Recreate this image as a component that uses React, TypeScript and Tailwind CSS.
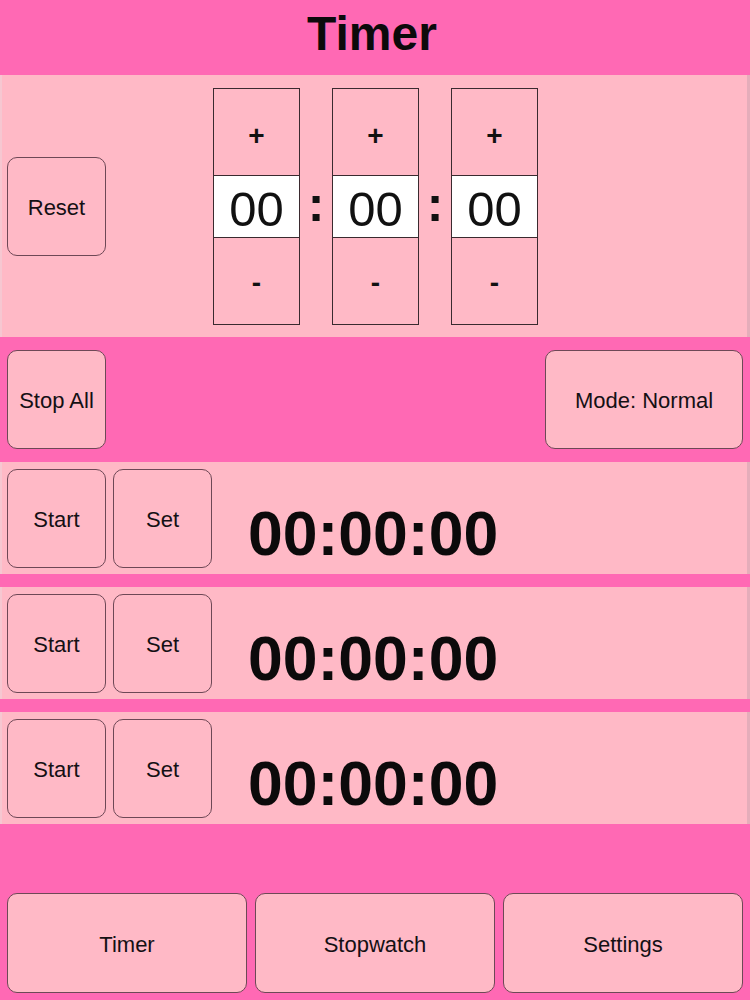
import React from "react";

const font = "font-['Liberation_Sans',Arial,Helvetica,sans-serif]";

function PinkButton({ label, className = "" }: { label: string; className?: string }) {
  return (
    <button
      type="button"
      className={`flex items-center justify-center rounded-[10px] border border-[#6e4856] bg-[#ffb9c6] pt-[3px] text-[22px] leading-none text-[#141014] ${className}`}
    >
      {label}
    </button>
  );
}

function Spinner({ value }: { value: string }) {
  return (
    <div className="flex w-[87px] flex-col border border-[#3a2a2f]">
      <button
        type="button"
        className="flex h-[86px] items-center justify-center bg-[#ffb9c6] pt-[9px] text-[28px] font-bold leading-none text-[#111]"
      >
        +
      </button>
      <div className="flex h-[63px] items-center justify-center border-y border-[#3a2a2f] bg-white pt-[6px] text-[49px] leading-none text-[#111]">
        {value}
      </div>
      <button
        type="button"
        className="flex h-[86px] items-center justify-center bg-[#ffb9c6] pt-[4px] text-[28px] font-bold leading-none text-[#111]"
      >
        -
      </button>
    </div>
  );
}

function Colon({ width }: { width: string }) {
  return (
    <div className={`flex items-center justify-center pb-[4px] text-[50px] font-bold leading-none text-[#111] ${width}`}>
      :
    </div>
  );
}

function TimerRow() {
  return (
    <div className="flex h-[112px] items-center gap-[7px] border-l-2 border-r-[3px] border-l-[#f6c7d1] border-r-[#e4adba] bg-[#ffb9c6] pl-[5px]">
      <PinkButton label="Start" className="h-[99px] w-[99px]" />
      <PinkButton label="Set" className="h-[99px] w-[99px]" />
      <div className="ml-[29px] mt-[28px] self-start pt-[12px] text-[62.5px] font-bold leading-none text-[#0c0a0b]">
        00:00:00
      </div>
    </div>
  );
}

export default function App() {
  return (
    <div className={`flex h-[1000px] w-[750px] flex-col bg-[#ff69b4] ${font}`}>
      <header className="flex h-[75px] justify-center pt-[10px]">
        <h1 className="pr-[6px] text-[48px] font-bold leading-none text-[#0c0a0b]">Timer</h1>
      </header>

      <section className="flex h-[262px] items-center border-l-2 border-r-[3px] border-l-[#f6c7d1] border-r-[#e4adba] bg-[#ffb9c6] pl-[5px]">
        <PinkButton label="Reset" className="h-[99px] w-[99px]" />
        <div className="ml-[107px] flex">
          <Spinner value="00" />
          <Colon width="w-[32px]" />
          <Spinner value="00" />
          <Colon width="w-[32px]" />
          <Spinner value="00" />
        </div>
      </section>

      <section className="flex h-[125px] items-start justify-between px-[7px] pt-[13px]">
        <PinkButton label="Stop All" className="h-[99px] w-[99px]" />
        <PinkButton label="Mode: Normal" className="h-[99px] w-[198px]" />
      </section>

      <div className="flex flex-col gap-[13px]">
        <TimerRow />
        <TimerRow />
        <TimerRow />
      </div>

      <nav className="mt-auto grid grid-cols-3 gap-[8px] px-[7px] pb-[7px]">
        <PinkButton label="Timer" className="h-[100px]" />
        <PinkButton label="Stopwatch" className="h-[100px]" />
        <PinkButton label="Settings" className="h-[100px]" />
      </nav>
    </div>
  );
}
